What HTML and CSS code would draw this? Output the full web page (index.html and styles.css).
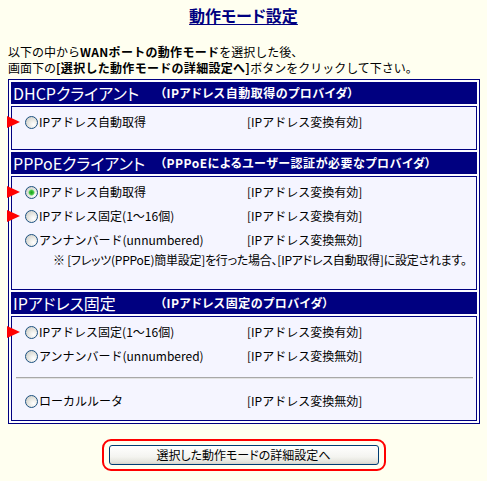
FILE: index.html
```html
<!DOCTYPE html>
<html lang="ja">
<head>
<meta charset="utf-8">
<title>動作モード設定</title>
<link rel="stylesheet" href="styles.css">
</head>
<body>
<div class="page">
  <h1 class="title">動作モード設定</h1>
  <p class="intro">以下の中から<b>WANポートの動作モード</b>を選択した後、<br>画面下の<b>[選択した動作モードの詳細設定へ]</b>ボタンをクリックして下さい。</p>

  <div class="modes">
    <div class="head"><span class="head-main">DHCPクライアント</span><span class="head-sub">（IPアドレス自動取得のプロバイダ）</span></div>
    <div class="body body-dhcp">
      <label class="row"><span class="arrow"></span><input type="radio" name="mode"><span class="label">IPアドレス自動取得</span><span class="status">[IPアドレス変換有効]</span></label>
    </div>

    <div class="head"><span class="head-main">PPPoEクライアント</span><span class="head-sub">（PPPoEによるユーザー認証が必要なプロバイダ）</span></div>
    <div class="body body-pppoe">
      <label class="row"><span class="arrow"></span><input type="radio" name="mode" checked><span class="label">IPアドレス自動取得</span><span class="status">[IPアドレス変換有効]</span></label>
      <label class="row"><span class="arrow"></span><input type="radio" name="mode"><span class="label">IPアドレス固定(1～16個)</span><span class="status">[IPアドレス変換有効]</span></label>
      <label class="row"><input type="radio" name="mode"><span class="label">アンナンバード(unnumbered)</span><span class="status">[IPアドレス変換無効]</span></label>
      <p class="note">※ [フレッツ(PPPoE)簡単設定]を行った場合、[IPアドレス自動取得]に設定されます。</p>
    </div>

    <div class="head"><span class="head-main">IPアドレス固定</span><span class="head-sub">（IPアドレス固定のプロバイダ）</span></div>
    <div class="body body-static">
      <label class="row"><span class="arrow"></span><input type="radio" name="mode"><span class="label">IPアドレス固定(1～16個)</span><span class="status">[IPアドレス変換有効]</span></label>
      <label class="row"><input type="radio" name="mode"><span class="label">アンナンバード(unnumbered)</span><span class="status">[IPアドレス変換無効]</span></label>
      <div class="sep"></div>
      <label class="row"><input type="radio" name="mode"><span class="label">ローカルルータ</span><span class="status">[IPアドレス変換無効]</span></label>
    </div>
  </div>

  <div class="action">
    <button type="button" class="btn">選択した動作モードの詳細設定へ</button>
  </div>
</div>
</body>
</html>
```
FILE: styles.css
```css
* { box-sizing: border-box; }

body {
  margin: 0;
  background: #fffff0;
  font-family: "Noto Sans CJK JP", "Noto Sans", sans-serif;
  font-size: 12px;
  color: #000;
}

.page {
  padding: 5px 8px 0 8px;
}

.title {
  margin: 0;
  font-size: 16px;
  line-height: 20px;
  font-weight: bold;
  text-align: center;
  color: #000080;
  text-decoration: underline;
  text-underline-offset: 2px;
  font-feature-settings: "palt" 1;
}

.intro {
  margin: 19px 0 3px 0;
  line-height: 16px;
  white-space: nowrap;
}

.intro b {
  letter-spacing: 0.3px;
}

.modes {
  width: 472px;
  border: 1px solid #000080;
  padding: 2px;
  background: #fcfcff;
  display: flex;
  flex-direction: column;
  gap: 2px;
}

.head {
  height: 22px;
  border: 1px solid #000080;
  background: #000080;
  color: #fff;
  display: grid;
  grid-template-columns: 147px auto;
  align-items: center;
  padding-left: 1px;
  white-space: nowrap;
  font-feature-settings: "palt" 1;
}

.head-main {
  font-size: 16px;
  line-height: 20px;
}

.head-sub {
  font-size: 12px;
  font-weight: bold;
  line-height: 20px;
  letter-spacing: 0.5px;
}

.body {
  border: 1px solid #000080;
  background: #f5f5ff;
  padding-top: 3px;
}

.body-dhcp { padding-bottom: 15px; }
.body-pppoe { padding-bottom: 21px; }
.body-static { padding-bottom: 7px; }

.row {
  position: relative;
  height: 24px;
  display: grid;
  grid-template-columns: 14px 208px 1fr;
  align-items: center;
  padding-left: 13px;
  white-space: nowrap;
}

.arrow {
  position: absolute;
  left: -5px;
  top: 6px;
  width: 0;
  height: 0;
  border-left: 13px solid #ff0000;
  border-top: 6px solid transparent;
  border-bottom: 6px solid transparent;
}

.row input[type="radio"] {
  appearance: none;
  -webkit-appearance: none;
  width: 13px;
  height: 13px;
  margin: 0;
  border: 1px solid #1c5180;
  border-radius: 50%;
  background: radial-gradient(circle at 68% 68%, #ffffff 0, #f0f0ec 30%, #cfcfc8 85%);
}

.row input[type="radio"]:checked {
  background:
    radial-gradient(circle at 50% 50%, #1e9e1e 0, #3cc43c 2px, #a8e0a8 3px, transparent 3.5px),
    radial-gradient(circle at 68% 68%, #ffffff 0, #f0f0ec 30%, #cfcfc8 85%);
}

.label {
  line-height: 16px;
}

.status {
  line-height: 16px;
}

.note {
  margin: 0;
  padding-left: 41px;
  line-height: 16px;
  white-space: nowrap;
  font-feature-settings: "palt" 1;
  letter-spacing: -0.25px;
}

.sep {
  margin: 9px 3px 10px 4px;
  height: 2px;
  border-top: 1px solid #a8a8a8;
  border-bottom: 1px solid #e2e2e2;
}

.action {
  margin: 15px auto 0 auto;
  width: 284px;
  height: 32px;
  border: 2px solid #ff0000;
  border-radius: 9px;
  display: flex;
  align-items: center;
  justify-content: center;
}

.btn {
  width: 270px;
  height: 20px;
  padding: 0;
  border: 1px solid #003c74;
  border-radius: 3px;
  background: linear-gradient(#ffffff 0%, #f4f4f0 60%, #e3e3db 90%, #d6d0c5 100%);
  font-family: "Noto Sans CJK JP", "Noto Sans", sans-serif;
  font-feature-settings: "palt" 1;
  font-size: 12px;
  line-height: 16px;
  color: #000;
}
```
